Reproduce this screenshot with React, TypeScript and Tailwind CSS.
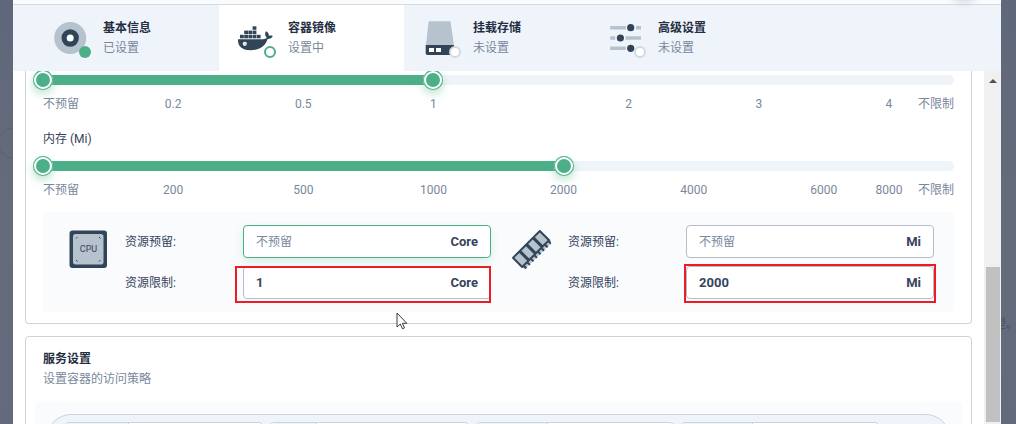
import { ReactNode, useState } from "react";
import clsx from "clsx";

interface Tick {
  label: string;
  column: string;
}

interface RangeSliderProps {
  name: string;
  ticks: Tick[];
  initial: number;
}

interface ResourceFieldProps {
  id: string;
  label: string;
  unit: string;
  value?: string;
  focused?: boolean;
  children?: ReactNode;
}

interface TabItem {
  title: string;
  status: string;
  state: "done" | "current" | "todo";
  icon: ReactNode;
}

const SLIDER_MAX = 7;

const THUMB =
  "[&::-webkit-slider-thumb]:appearance-none [&::-webkit-slider-thumb]:pointer-events-auto [&::-webkit-slider-thumb]:w-5 [&::-webkit-slider-thumb]:h-5 [&::-webkit-slider-thumb]:rounded-full [&::-webkit-slider-thumb]:bg-[#4caf88] [&::-webkit-slider-thumb]:shadow-[inset_0_0_0_1px_#4caf88,inset_0_0_0_3px_#ffffff,0_4px_8px_rgba(85,188,138,0.4)]";

const cpuTicks: Tick[] = [
  { label: "不预留", column: "col-start-1 justify-self-start" },
  { label: "0.2", column: "col-start-2 justify-self-center" },
  { label: "0.5", column: "col-start-4 justify-self-center" },
  { label: "1", column: "col-start-6 justify-self-center" },
  { label: "2", column: "col-start-9 justify-self-center" },
  { label: "3", column: "col-start-11 justify-self-center" },
  { label: "4", column: "col-start-13 justify-self-center" },
  { label: "不限制", column: "col-start-13 justify-self-end" },
];

const memoryTicks: Tick[] = [
  { label: "不预留", column: "col-start-1 justify-self-start" },
  { label: "200", column: "col-start-2 justify-self-center" },
  { label: "500", column: "col-start-4 justify-self-center" },
  { label: "1000", column: "col-start-6 justify-self-center" },
  { label: "2000", column: "col-start-8 justify-self-center" },
  { label: "4000", column: "col-start-10 justify-self-center" },
  { label: "6000", column: "col-start-12 justify-self-center" },
  { label: "8000", column: "col-start-13 justify-self-center" },
  { label: "不限制", column: "col-start-13 justify-self-end" },
];

function InfoIcon() {
  return (
    <svg viewBox="0 0 40 40" className="w-10 h-10" aria-hidden="true">
      <circle cx="16.2" cy="20" r="16" fill="#b6c2cd" />
      <circle cx="16.2" cy="20" r="8.7" fill="#324558" />
      <circle cx="16.2" cy="20" r="3.5" fill="#fff" />
    </svg>
  );
}

function DockerIcon() {
  return (
    <svg viewBox="0 0 40 40" className="w-10 h-10 overflow-visible" aria-hidden="true">
      <g fill="#324558">
        <rect x="13.6" y="8.3" width="3.8" height="3.5" />
        <rect x="5.2" y="12.6" width="3.8" height="3.5" />
        <rect x="9.4" y="12.6" width="3.8" height="3.5" />
        <rect x="13.6" y="12.6" width="3.8" height="3.5" />
        <rect x="1" y="16.8" width="3.8" height="3.5" />
        <rect x="5.2" y="16.8" width="3.8" height="3.5" />
        <rect x="9.4" y="16.8" width="3.8" height="3.5" />
        <rect x="13.6" y="16.8" width="3.8" height="3.5" />
        <rect x="17.8" y="16.8" width="3.8" height="3.5" />
        <path d="M-1 21.2h24.900c1.800 0 3.100-.5 3.900-1.600-1.900-1.900-2.200-4.300-.8-6.300 2 1 3 2.600 2.900 4.600 1.300-.5 2.600-.5 3.900.1-.9 1.900-2.700 3-5.200 2.900-2.200 7.400-8.300 11.300-17.200 11.300C3.500 32.200-1.500 28.600-1 21.200z" />
      </g>
      <circle cx="5.800" cy="25.800" r="2.100" fill="#fff" />
      <circle cx="6.100" cy="26" r="0.900" fill="#b6c2cd" />
    </svg>
  );
}

function StorageIcon() {
  return (
    <svg viewBox="-1 0 40 40" className="w-10 h-10" aria-hidden="true">
      <path d="M4.500 3.200h20c.6 0 1 .3 1.100.9L29 27.500H1L3.500 4.100c.1-.6.500-.9 1-.9z" fill="#b6c2cd" />
      <path d="M.7 27h28.300v8.300c0 1-.8 1.700-1.700 1.700H2.400C1.400 37 .7 36.300.7 35.300z" fill="#324558" />
      <rect x="4" y="30" width="5" height="4" fill="#fff" />
      <rect x="11" y="30" width="5" height="4" fill="#fff" />
    </svg>
  );
}

function SlidersIcon() {
  return (
    <svg viewBox="-1 0 40 40" className="w-10 h-10" aria-hidden="true">
      <g stroke="#b6c2cd" strokeWidth="3.600">
        <path d="M.2 9.700h15.600M26 9.700h5M.2 20h5M15.600 20H31M.2 30.300h15.600" />
      </g>
      <g fill="#324558">
        <circle cx="20.700" cy="9.700" r="3.600" />
        <circle cx="10.400" cy="20" r="3.600" />
        <circle cx="20.700" cy="30.300" r="3.600" />
      </g>
    </svg>
  );
}

function CpuIcon() {
  return (
    <svg viewBox="0 0 40 40" className="w-10 h-10" aria-hidden="true">
      <rect x="1.500" y="1.500" width="37.500" height="37.500" rx="3" fill="#324558" />
      <rect x="5" y="5" width="30.500" height="30.500" rx="2.500" fill="#b6c2cd" />
      <g stroke="#324558" strokeWidth="1">
        <path d="M8 9.500l1.500-1.500M31 8l1.500 1.500M8 31l1.500 1.500M31 32.500l1.500-1.500" />
      </g>
      <text
        x="20.500"
        y="22.500"
        textAnchor="middle"
        fontFamily="Roboto, sans-serif"
        fontSize="9"
        fill="#324558"
      >
        CPU
      </text>
    </svg>
  );
}

function MemoryIcon() {
  return (
    <svg viewBox="0 0 40 40" className="w-10 h-10" aria-hidden="true">
      <g transform="rotate(-45 20 20)">
        <path d="M1 22h39v8H1z" fill="#b6c2cd" />
        <path
          d="M3 27v3.500M8 27v3.500M13 27v3.500M18 27v3.500M23 27v3.500M28 27v3.500M33 27v3.500M38 27v3.500"
          stroke="#324558"
          strokeWidth="2"
        />
        <rect x="0" y="12.500" width="40" height="15" rx="1" fill="#324558" />
        <g fill="#b6c2cd">
          <rect x="2" y="14.500" width="7" height="11" />
          <rect x="12" y="14.500" width="6.500" height="11" />
          <rect x="21.500" y="14.500" width="6.500" height="11" />
          <rect x="31" y="14.500" width="7" height="11" />
        </g>
      </g>
    </svg>
  );
}

const tabs: TabItem[] = [
  { title: "基本信息", status: "已设置", state: "done", icon: <InfoIcon /> },
  { title: "容器镜像", status: "设置中", state: "current", icon: <DockerIcon /> },
  { title: "挂载存储", status: "未设置", state: "todo", icon: <StorageIcon /> },
  { title: "高级设置", status: "未设置", state: "todo", icon: <SlidersIcon /> },
];

function Tab({ tab }: { tab: TabItem }) {
  return (
    <button
      type="button"
      className={clsx(
        "w-[185px] flex items-center pl-5 text-left",
        tab.state === "current" && "bg-white",
      )}
    >
      <span className="relative shrink-0">
        {tab.icon}
        <span
          className={clsx(
            "absolute right-[3px] bottom-0 w-3 h-3 rounded-full",
            tab.state === "done" && "bg-[#4caf88]",
            tab.state === "current" && "bg-white border-2 border-[#4caf88]",
            tab.state === "todo" && "bg-white border-2 border-[#d3d9e2]",
          )}
        />
      </span>
      <span className="ml-[9px] flex flex-col">
        <span className="font-bold leading-5 text-[#242e42]">{tab.title}</span>
        <span className="leading-5 text-[#79879c]">{tab.status}</span>
      </span>
    </button>
  );
}

function RangeSlider({ name, ticks, initial }: RangeSliderProps) {
  const [low, setLow] = useState(0);
  const [high, setHigh] = useState(initial);

  return (
    <div>
      <div className="relative h-[10px] rounded-full bg-[#eff4f9]">
        <div
          className="h-full bg-[#4caf88]"
          style={{
            marginLeft: `${(low / SLIDER_MAX) * 100}%`,
            width: `${((high - low) / SLIDER_MAX) * 100}%`,
          }}
        />
        <input
          type="range"
          aria-label={`${name} 资源预留`}
          min={0}
          max={SLIDER_MAX}
          step={0.5}
          value={low}
          onChange={(e) => setLow(Math.min(Number(e.target.value), high))}
          className={clsx(
            "absolute -inset-x-[10px] -inset-y-[5px] appearance-none bg-transparent pointer-events-none",
            THUMB,
          )}
        />
        <input
          type="range"
          aria-label={`${name} 资源限制`}
          min={0}
          max={SLIDER_MAX}
          step={0.5}
          value={high}
          onChange={(e) => setHigh(Math.max(Number(e.target.value), low))}
          className={clsx(
            "absolute -inset-x-[10px] -inset-y-[5px] appearance-none bg-transparent pointer-events-none",
            THUMB,
          )}
        />
      </div>
      <div className="mt-[9px] grid grid-cols-14 grid-rows-1 leading-5 text-[#79879c]">
        {ticks.map((tick) => (
          <span
            key={tick.label}
            className={clsx("row-start-1 col-span-2 whitespace-nowrap", tick.column)}
          >
            {tick.label}
          </span>
        ))}
      </div>
    </div>
  );
}

function ResourceField({ id, label, unit, value, focused, children }: ResourceFieldProps) {
  return (
    <>
      <label htmlFor={id} className="self-center pl-[17px] text-[#36435c]">
        {label}
      </label>
      <div className="relative">
        <div
          className={clsx(
            "h-[33px] flex items-center rounded border bg-white px-3 text-[13px] font-bold text-[#36435c]",
            focused
              ? "border-[#4caf88] shadow-[0_4px_8px_rgba(85,188,138,0.2)]"
              : "border-[#b6bcc9]",
          )}
        >
          <input
            id={id}
            type="text"
            defaultValue={value}
            placeholder="不预留"
            className="min-w-0 flex-1 bg-transparent outline-none placeholder:text-xs placeholder:font-normal placeholder:text-[#79879c]"
          />
          <span>{unit}</span>
        </div>
        {children}
      </div>
    </>
  );
}

function ServiceField({ name, addon }: { name: string; addon: string }) {
  return (
    <div className="flex h-8 flex-1 overflow-hidden rounded border border-[#ccd3db] bg-white">
      <span className={clsx("shrink-0 border-r border-[#ccd3db] bg-[#eff4f9]", addon)} />
      <input type="text" aria-label={name} className="min-w-0 flex-1 outline-none" />
    </div>
  );
}

function Backdrop() {
  return (
    <div className="absolute inset-0 overflow-hidden bg-gradient-to-b from-[#5f687b] via-[#646b7a] to-[#636a7c]">
      <div className="absolute -left-[2px] top-[127px] w-8 h-8 rounded-full border border-[#586277]" />
      <span className="absolute -right-[2px] top-[316px] text-xs text-[#464f63]">型。</span>
    </div>
  );
}

function App() {
  return (
    <div className="relative h-screen overflow-hidden text-xs font-['Roboto','Noto_Sans_CJK_SC',sans-serif]">
      <Backdrop />

      <div className="relative mx-[13px] mr-[15px] h-full flex flex-col bg-white">
        {/* Modal header */}
        <header className="relative h-[5px] shrink-0 border-b border-[#d5dbe3] bg-[#f9fbfd]">
          <button
            type="button"
            aria-label="确定"
            className="absolute right-[21px] -top-[36px] w-8 h-8 rounded-full bg-[#242e42] shadow-[0_4px_10px_rgba(36,46,66,0.3)]"
          />
        </header>

        {/* Step tabs */}
        <nav className="h-[66px] shrink-0 flex bg-[#eff4fb] pl-[21px]">
          {tabs.map((tab) => (
            <Tab key={tab.title} tab={tab} />
          ))}
        </nav>

        <div className="flex min-h-0 flex-1">
          <main className="min-w-0 flex-1 overflow-hidden px-3">
            <section className="rounded-b border border-t-0 border-[#ccd3db] px-[17px] pt-1 pb-[11px]">
              <RangeSlider name="CPU" ticks={cpuTicks} initial={3} />
              <p className="mt-[15px] mb-3 leading-5 text-[#36435c]">内存 (Mi)</p>
              <RangeSlider name="内存" ticks={memoryTicks} initial={4} />

              <div className="mt-3 grid grid-cols-2 gap-5 rounded bg-[#f9fbfd] py-[13px] pl-[25px] pr-5">
                <div className="grid grid-cols-[40px_135px_1fr] gap-y-2">
                  <div className="row-span-2 pt-1">
                    <CpuIcon />
                  </div>
                  <ResourceField id="cpu-request" label="资源预留:" unit="Core" focused />
                  <ResourceField id="cpu-limit" label="资源限制:" unit="Core" value="1">
                    <div className="absolute -left-2 right-0 top-0 -bottom-1 border-2 border-[#ed1c24] pointer-events-none" />
                  </ResourceField>
                </div>
                <div className="grid grid-cols-[40px_135px_1fr] gap-y-2">
                  <div className="row-span-2 pt-1">
                    <MemoryIcon />
                  </div>
                  <ResourceField id="memory-request" label="资源预留:" unit="Mi" />
                  <ResourceField id="memory-limit" label="资源限制:" unit="Mi" value="2000">
                    <div className="absolute -left-[2px] -right-[2px] -top-[2px] -bottom-1 border-2 border-[#ed1c24] pointer-events-none" />
                  </ResourceField>
                </div>
              </div>
            </section>

            <section className="mt-3 rounded border border-[#ccd3db] px-[9px] pt-3">
              <div className="px-2">
                <h2 className="font-bold leading-5 text-[#242e42]">服务设置</h2>
                <p className="leading-5 text-[#79879c]">设置容器的访问策略</p>
              </div>
              <div className="mt-[13px] rounded bg-[#f9fbfd] p-3">
                <div className="flex gap-[7px] rounded-full border border-[#ccd3db] bg-[#eff4fb] py-[7px] pl-[17px] pr-[70px]">
                  <ServiceField name="协议" addon="w-[63px]" />
                  <ServiceField name="名称" addon="w-[46px]" />
                  <ServiceField name="容器端口" addon="w-[71px]" />
                  <ServiceField name="服务端口" addon="w-[71px]" />
                </div>
              </div>
            </section>
          </main>

          {/* Scrollbar track */}
          <div className="w-[17px] shrink-0 flex flex-col items-center bg-[#f0f0f0]">
            <svg viewBox="0 0 8 4" className="mt-2 w-2 h-1" aria-hidden="true">
              <path d="M0 4l4-4 4 4z" fill="#505050" />
            </svg>
            <div className="mt-auto mb-[2px] h-[44%] w-[14px] bg-[#c1c1c1]" />
          </div>
        </div>
      </div>

      {/* Mouse pointer */}
      <svg
        viewBox="0 0 12 18"
        className="absolute left-[396px] top-[312px] w-3 h-[18px] pointer-events-none"
        aria-hidden="true"
      >
        <path
          d="M1 1v14l3.300-3 2.200 4.800 2-.9-2.100-4.600h4.400z"
          fill="#fff"
          stroke="#3a3a3a"
          strokeWidth="1"
        />
      </svg>
    </div>
  );
}

export default App;
